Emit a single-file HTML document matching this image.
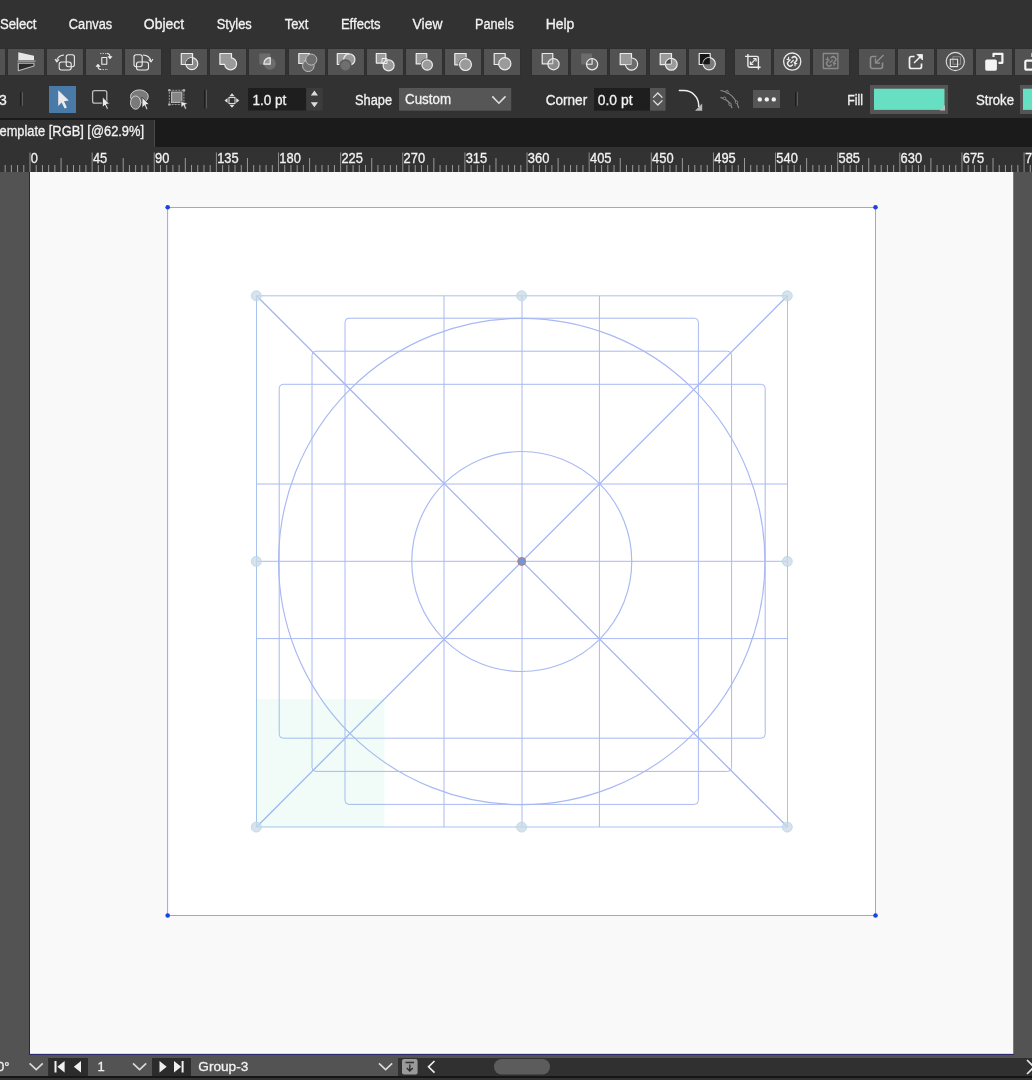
<!DOCTYPE html>
<html><head><meta charset="utf-8"><style>
html,body{margin:0;padding:0;background:#303030;overflow:hidden}
svg{display:block;will-change:transform}
text{font-family:"Liberation Sans", sans-serif}
</style></head><body>
<svg width="1032" height="1080" viewBox="0 0 1032 1080"><rect x="0" y="0" width="1032" height="118" fill="#323232" /><rect x="0" y="118" width="1032" height="29" fill="#1b1b1b" /><rect x="0" y="120" width="155" height="27" fill="#323232" /><rect x="154" y="120" width="1" height="27" fill="#4a4a4a" /><rect x="0" y="147" width="1032" height="25" fill="#323232" /><rect x="0" y="172" width="1032" height="886" fill="#535353" /><rect x="30" y="172" width="984" height="882" fill="#f9f9f9" /><rect x="29" y="172" width="1" height="883" fill="#1f1f8a" /><rect x="29" y="1054" width="985" height="1" fill="#2a2a6a" /><rect x="1013" y="172" width="1" height="882" fill="#6b6bf0" /><rect x="30" y="1053" width="983" height="1" fill="#d8d8fb" /><rect x="0" y="1058" width="1032" height="18" fill="#303030" /><rect x="0" y="1076" width="1032" height="2" fill="#161616" /><rect x="0" y="1078" width="1032" height="2" fill="#323232" /><text x="-0.09999999999999998" y="29" font-size="14" fill="#f2f2f2" textLength="36.5" lengthAdjust="spacingAndGlyphs" stroke-width="0.3" stroke="#f2f2f2">Select</text><text x="68.80000000000001" y="29" font-size="14" fill="#f2f2f2" textLength="43.4" lengthAdjust="spacingAndGlyphs" stroke-width="0.3" stroke="#f2f2f2">Canvas</text><text x="143.8" y="29" font-size="14" fill="#f2f2f2" textLength="40.3" lengthAdjust="spacingAndGlyphs" stroke-width="0.3" stroke="#f2f2f2">Object</text><text x="216.8" y="29" font-size="14" fill="#f2f2f2" textLength="35.0" lengthAdjust="spacingAndGlyphs" stroke-width="0.3" stroke="#f2f2f2">Styles</text><text x="284.7" y="29" font-size="14" fill="#f2f2f2" textLength="23.7" lengthAdjust="spacingAndGlyphs" stroke-width="0.3" stroke="#f2f2f2">Text</text><text x="340.9" y="29" font-size="14" fill="#f2f2f2" textLength="39.7" lengthAdjust="spacingAndGlyphs" stroke-width="0.3" stroke="#f2f2f2">Effects</text><text x="412.59999999999997" y="29" font-size="14" fill="#f2f2f2" textLength="29.8" lengthAdjust="spacingAndGlyphs" stroke-width="0.3" stroke="#f2f2f2">View</text><text x="475.0" y="29" font-size="14" fill="#f2f2f2" textLength="38.8" lengthAdjust="spacingAndGlyphs" stroke-width="0.3" stroke="#f2f2f2">Panels</text><text x="545.6999999999999" y="29" font-size="14" fill="#f2f2f2" textLength="28.7" lengthAdjust="spacingAndGlyphs" stroke-width="0.3" stroke="#f2f2f2">Help</text><rect x="-32" y="48" width="38" height="28" fill="#2f2f2f" /><rect x="-31" y="49" width="36" height="26" fill="#525252" /><rect x="7" y="48" width="38" height="28" fill="#2f2f2f" /><rect x="8" y="49" width="36" height="26" fill="#525252" /><rect x="46" y="48" width="38" height="28" fill="#2f2f2f" /><rect x="47" y="49" width="36" height="26" fill="#525252" /><rect x="85" y="48" width="38" height="28" fill="#2f2f2f" /><rect x="86" y="49" width="36" height="26" fill="#525252" /><rect x="124" y="48" width="38" height="28" fill="#2f2f2f" /><rect x="125" y="49" width="36" height="26" fill="#525252" /><rect x="170" y="48" width="38" height="28" fill="#2f2f2f" /><rect x="171" y="49" width="36" height="26" fill="#525252" /><rect x="209" y="48" width="38" height="28" fill="#2f2f2f" /><rect x="210" y="49" width="36" height="26" fill="#525252" /><rect x="248" y="48" width="38" height="28" fill="#2f2f2f" /><rect x="249" y="49" width="36" height="26" fill="#525252" /><rect x="288" y="48" width="38" height="28" fill="#2f2f2f" /><rect x="289" y="49" width="36" height="26" fill="#525252" /><rect x="327" y="48" width="38" height="28" fill="#2f2f2f" /><rect x="328" y="49" width="36" height="26" fill="#525252" /><rect x="366" y="48" width="38" height="28" fill="#2f2f2f" /><rect x="367" y="49" width="36" height="26" fill="#525252" /><rect x="405" y="48" width="38" height="28" fill="#2f2f2f" /><rect x="406" y="49" width="36" height="26" fill="#525252" /><rect x="444" y="48" width="38" height="28" fill="#2f2f2f" /><rect x="445" y="49" width="36" height="26" fill="#525252" /><rect x="483" y="48" width="38" height="28" fill="#2f2f2f" /><rect x="484" y="49" width="36" height="26" fill="#525252" /><rect x="531" y="48" width="38" height="28" fill="#2f2f2f" /><rect x="532" y="49" width="36" height="26" fill="#525252" /><rect x="570" y="48" width="38" height="28" fill="#2f2f2f" /><rect x="571" y="49" width="36" height="26" fill="#525252" /><rect x="609" y="48" width="38" height="28" fill="#2f2f2f" /><rect x="610" y="49" width="36" height="26" fill="#525252" /><rect x="649" y="48" width="38" height="28" fill="#2f2f2f" /><rect x="650" y="49" width="36" height="26" fill="#525252" /><rect x="688" y="48" width="38" height="28" fill="#2f2f2f" /><rect x="689" y="49" width="36" height="26" fill="#525252" /><rect x="734" y="48" width="38" height="28" fill="#2f2f2f" /><rect x="735" y="49" width="36" height="26" fill="#525252" /><rect x="773" y="48" width="38" height="28" fill="#2f2f2f" /><rect x="774" y="49" width="36" height="26" fill="#525252" /><rect x="812" y="48" width="38" height="28" fill="#2f2f2f" /><rect x="813" y="49" width="36" height="26" fill="#525252" /><rect x="858" y="48" width="38" height="28" fill="#2f2f2f" /><rect x="859" y="49" width="36" height="26" fill="#525252" /><rect x="897" y="48" width="38" height="28" fill="#2f2f2f" /><rect x="898" y="49" width="36" height="26" fill="#525252" /><rect x="936" y="48" width="38" height="28" fill="#2f2f2f" /><rect x="937" y="49" width="36" height="26" fill="#525252" /><rect x="975" y="48" width="38" height="28" fill="#2f2f2f" /><rect x="976" y="49" width="36" height="26" fill="#525252" /><rect x="1014" y="48" width="38" height="28" fill="#2f2f2f" /><rect x="1015" y="49" width="36" height="26" fill="#525252" /><g transform="translate(8,49)" stroke-linejoin="round"><path d="M10.3 3.2 L26 6.8 L26 11.2 L10.3 11.2 Z" fill="#e6e6e6" stroke="none" stroke-width="1.2" /><rect x="9.5" y="11.5" width="18" height="1.4" fill="#9a9a9a"/><path d="M10.3 14.3 L26 14.3 L26 17 L10.3 21.7 Z" fill="#2a2a2a" stroke="#bdbdbd" stroke-width="1.1" /></g><g transform="translate(47,49)" stroke-linejoin="round"><rect x="19.2" y="5.8" width="8.2" height="12" rx="2.2" fill="none" stroke="#ececec" stroke-width="1.1"/><rect x="12.2" y="13" width="12" height="8" rx="2.2" fill="none" stroke="#ececec" stroke-width="1.1"/><path d="M9.5 12 Q11 6.5 17 6" fill="none" stroke="#ececec" stroke-width="1.1" /><path d="M8 10 L9.8 13 L12 10.4" fill="none" stroke="#ececec" stroke-width="1.1" /></g><g transform="translate(86,49)" stroke-linejoin="round"><rect x="15.8" y="8.5" width="5" height="6.8" rx="0" fill="none" stroke="#ececec" stroke-width="1.1"/><path d="M14 4.5 L22 4.5" fill="none" stroke="#bbbbbb" stroke-width="1" stroke-dasharray="1.5 1"/><path d="M14 20.5 L22 20.5" fill="none" stroke="#bbbbbb" stroke-width="1" stroke-dasharray="1.5 1"/><path d="M21 4.5 Q24 4.5 24 8" fill="none" stroke="#ececec" stroke-width="1.1" /><path d="M22 7.5 L24 10 L26 7.5 Z" fill="#ececec" stroke="#ececec" stroke-width="0.6" /><path d="M15 20.5 Q12 20.5 12 17" fill="none" stroke="#ececec" stroke-width="1.1" /><path d="M10 17.5 L12 15 L14 17.5 Z" fill="#ececec" stroke="#ececec" stroke-width="0.6" /></g><g transform="translate(125,49)" stroke-linejoin="round"><rect x="9" y="5.8" width="8.2" height="12" rx="2.2" fill="none" stroke="#ececec" stroke-width="1.1"/><rect x="11.5" y="13" width="12" height="8" rx="2.2" fill="none" stroke="#ececec" stroke-width="1.1"/><path d="M18 6 Q24.5 6.5 26 12" fill="none" stroke="#ececec" stroke-width="1.1" /><path d="M23.8 10.4 L26 13 L28 10" fill="none" stroke="#ececec" stroke-width="1.1" /></g><g transform="translate(171,49)" stroke-linejoin="round"><rect x="10.3" y="4.5" width="11.2" height="11" rx="0" fill="#8a8a8a" stroke="#ececec" stroke-width="1.2"/><circle cx="20.8" cy="14.7" r="6" fill="#8a8a8a" stroke="#ececec" stroke-width="1.2"/><path d="M14.8 15.1 A6 6 0 0 1 21.1 8.7 L21.1 15.1 Z" fill="#555555" stroke="none" stroke-width="1.2" /><path d="M10.3 15.5 L21.5 15.5 L21.5 4.5" fill="none" stroke="#ececec" stroke-width="1.2" /></g><g transform="translate(210,49)" stroke-linejoin="round"><path d="M9.9 4.5 L21.5 4.5 L21.5 8.9 A6 6 0 1 1 14.6 15.3 L9.9 15.3 Z" fill="#9a9a9a" stroke="#ececec" stroke-width="1.2" /></g><g transform="translate(249,49)" stroke-linejoin="round"><rect x="10.3" y="4.5" width="11" height="11" rx="0" fill="#6c6c6c" stroke="none" stroke-width="1.2"/><circle cx="20.8" cy="14.7" r="6" fill="#6c6c6c" stroke="none" stroke-width="1.2"/><path d="M14.8 15.2 A6.2 6.2 0 0 1 21.2 8.6 L21.2 15.2 Z" fill="#9a9a9a" stroke="#ececec" stroke-width="1.2" /></g><g transform="translate(289,49)" stroke-linejoin="round"><path d="M9.8 4.5 L20.5 4.5 L14.8 14.5 L9.8 14.5 Z" fill="#9a9a9a" stroke="#ececec" stroke-width="1.2" /><circle cx="19.3" cy="16.8" r="5.8" fill="#707070" stroke="#bdbdbd" stroke-width="1"/><circle cx="22.3" cy="10.6" r="5.5" fill="#6e6e6e" stroke="#bdbdbd" stroke-width="1"/></g><g transform="translate(328,49)" stroke-linejoin="round"><path d="M9.3 4.5 L20.5 4.5 L20.5 15.5 L9.3 15.5 Z" fill="#9a9a9a" stroke="#ececec" stroke-width="1.2" /><circle cx="21.3" cy="10.5" r="5.6" fill="#9a9a9a" stroke="#ececec" stroke-width="1.2"/><circle cx="17.4" cy="16.6" r="5.6" fill="#6f6f6f" stroke="#555555" stroke-width="1.4"/></g><g transform="translate(367,49)" stroke-linejoin="round"><rect x="9.3" y="4.5" width="9.6" height="9.6" rx="0" fill="#9a9a9a" stroke="#ececec" stroke-width="1.2"/><circle cx="21.6" cy="16.4" r="5.5" fill="#9a9a9a" stroke="#ececec" stroke-width="1.2"/><rect x="15" y="9.5" width="5" height="5" rx="0" fill="none" stroke="#ececec" stroke-width="1"/></g><g transform="translate(406,49)" stroke-linejoin="round"><rect x="10.2" y="4.5" width="10.6" height="10.4" rx="0" fill="#9a9a9a" stroke="#ececec" stroke-width="1.2"/><circle cx="21.2" cy="16" r="5.5" fill="#555555" stroke="#555555" stroke-width="2.2"/><circle cx="21.2" cy="16" r="5.2" fill="#9a9a9a" stroke="#ececec" stroke-width="1.2"/></g><g transform="translate(445,49)" stroke-linejoin="round"><rect x="9.8" y="4.5" width="11.3" height="11.3" rx="0" fill="#9a9a9a" stroke="#ececec" stroke-width="1.2"/><circle cx="20.5" cy="15.6" r="6.1" fill="#555555" stroke="#555555" stroke-width="2.2"/><circle cx="20.5" cy="15.6" r="5.9" fill="#9a9a9a" stroke="#ececec" stroke-width="1.2"/></g><g transform="translate(484,49)" stroke-linejoin="round"><rect x="10.2" y="4.5" width="11" height="11" rx="0" fill="#7a7a7a" stroke="#ececec" stroke-width="1.2"/><circle cx="20.8" cy="14.7" r="6.1" fill="#9a9a9a" stroke="#ececec" stroke-width="1.2"/></g><g transform="translate(532,49)" stroke-linejoin="round"><rect x="10.2" y="4.5" width="10.6" height="10.4" rx="0" fill="#7a7a7a" stroke="#ececec" stroke-width="1.2"/><circle cx="21.5" cy="15.2" r="5.6" fill="#8a8a8a" stroke="#ececec" stroke-width="1.2"/><path d="M16 14.8 L20.8 14.8 L20.8 9.5" fill="none" stroke="#ececec" stroke-width="1" /></g><g transform="translate(571,49)" stroke-linejoin="round"><rect x="10.2" y="4.5" width="11" height="11" rx="0" fill="#6c6c6c" stroke="none" stroke-width="1.2"/><circle cx="21.1" cy="15.3" r="5.6" fill="#6a6a6a" stroke="#ececec" stroke-width="1.2"/><path d="M15.5 15.2 L21.1 15.2 L21.1 9.7" fill="none" stroke="#ececec" stroke-width="1.1" /></g><g transform="translate(610,49)" stroke-linejoin="round"><rect x="10.2" y="4.5" width="11.3" height="11.2" rx="0" fill="#9a9a9a" stroke="#ececec" stroke-width="1.2"/><path d="M21.5 9 A6.1 6.1 0 1 1 15.5 15.7 L21.5 15.7 Z" fill="#6c6c6c" stroke="none" stroke-width="1.2" /><path d="M21.5 9 A6.1 6.1 0 1 1 15.5 15.7" fill="none" stroke="#ececec" stroke-width="1.2" /></g><g transform="translate(650,49)" stroke-linejoin="round"><rect x="10.2" y="4.5" width="11.3" height="11.2" rx="0" fill="#9a9a9a" stroke="#ececec" stroke-width="1.2"/><circle cx="21.3" cy="15.3" r="5.9" fill="#9a9a9a" stroke="#ececec" stroke-width="1.2"/><path d="M15.4 15.2 A5.9 5.9 0 0 1 21.3 9.4 L21.3 15.2 Z" fill="#4a4a4a" stroke="#ececec" stroke-width="1" /></g><g transform="translate(689,49)" stroke-linejoin="round"><rect x="10.2" y="4.5" width="11" height="11" rx="0" fill="#151515" stroke="#ececec" stroke-width="1.2"/><circle cx="20.2" cy="14.8" r="6.1" fill="#7a7a7a" stroke="#ececec" stroke-width="1.2"/><path d="M14.1 15.2 A6.1 6.1 0 0 1 20.8 8.7 L20.8 15.2 Z" fill="#151515" stroke="none" stroke-width="1.2" /></g><g transform="translate(735,49)" stroke-linejoin="round"><path d="M12.9 5 L12.9 16.6 Q12.9 18.2 14.5 18.2 L25.6 18.2" fill="none" stroke="#ececec" stroke-width="1.4" /><path d="M10 7.4 L21.8 7.4 Q23.4 7.4 23.4 9 L23.4 20.6" fill="none" stroke="#ececec" stroke-width="1.4" /><path d="M15.6 15.2 L20.9 9.9" fill="none" stroke="#ececec" stroke-width="1.2" /><path d="M18.2 9.7 L21.1 9.7 L21.1 12.6" fill="none" stroke="#ececec" stroke-width="1.2" /><path d="M15.4 12.5 L15.4 15.4 L18.3 15.4" fill="none" stroke="#ececec" stroke-width="1.2" /></g><g transform="translate(774,49)" stroke-linejoin="round"><circle cx="18.2" cy="12.6" r="8.6" fill="none" stroke="#ececec" stroke-width="1.3"/><g transform="rotate(45 18.2 12.4)"><path d="M15.6 10.6 L15.6 9.6 A2.6 2.6 0 0 1 20.8 9.6 L20.8 12.6" fill="none" stroke="#ececec" stroke-width="1.5"/><path d="M20.8 14.2 L20.8 15.2 A2.6 2.6 0 0 1 15.6 15.2 L15.6 12.2" fill="none" stroke="#ececec" stroke-width="1.5"/><path d="M18.2 10.2 L18.2 14.6" fill="none" stroke="#ececec" stroke-width="1.3"/></g><path d="M14.6 7.8 L14.6 10.4 L12.6 10.4" fill="none" stroke="#ececec" stroke-width="1.1" /><path d="M21 17.2 L21 14.6 L23.2 14.6" fill="none" stroke="#ececec" stroke-width="1.1" /></g><g transform="translate(813,49)" stroke-linejoin="round"><rect x="10.3" y="4.5" width="14.6" height="15" rx="0" fill="none" stroke="#8a8a8a" stroke-width="1.3"/><g transform="rotate(45 18.2 12.4)"><path d="M15.6 10.6 L15.6 9.6 A2.6 2.6 0 0 1 20.8 9.6 L20.8 12.6" fill="none" stroke="#8a8a8a" stroke-width="1.5"/><path d="M20.8 14.2 L20.8 15.2 A2.6 2.6 0 0 1 15.6 15.2 L15.6 12.2" fill="none" stroke="#8a8a8a" stroke-width="1.5"/><path d="M18.2 10.2 L18.2 14.6" fill="none" stroke="#8a8a8a" stroke-width="1.3"/></g><path d="M14.6 7.8 L14.6 10.4 L12.6 10.4" fill="none" stroke="#8a8a8a" stroke-width="1.1" /><path d="M21 17.2 L21 14.6 L23.2 14.6" fill="none" stroke="#8a8a8a" stroke-width="1.1" /></g><g transform="translate(859,49)" stroke-linejoin="round"><path d="M17.5 7.5 L13.5 7.5 Q11.5 7.5 11.5 9.5 L11.5 17.5 Q11.5 19.5 13.5 19.5 L21.5 19.5 Q23.5 19.5 23.5 17.5 L23.5 13.5" fill="none" stroke="#8e8e8e" stroke-width="1.6" /><path d="M24.5 6 L17 13.5" fill="none" stroke="#8e8e8e" stroke-width="1.4" /><path d="M16.5 9.5 L16.5 14 L21 14" fill="none" stroke="#8e8e8e" stroke-width="1.4" /></g><g transform="translate(898,49)" stroke-linejoin="round"><path d="M16.5 7.5 L13.5 7.5 Q11.5 7.5 11.5 9.5 L11.5 17.5 Q11.5 19.5 13.5 19.5 L21.5 19.5 Q23.5 19.5 23.5 17.5 L23.5 14.5" fill="none" stroke="#f2f2f2" stroke-width="1.7" /><path d="M16 14 L23.8 6.3" fill="none" stroke="#f2f2f2" stroke-width="1.5" /><path d="M19 5.5 L24.5 5.5 L24.5 11 Z" fill="#f2f2f2" stroke="#f2f2f2" stroke-width="0.8" /></g><g transform="translate(937,49)" stroke-linejoin="round"><circle cx="18.3" cy="12.5" r="9.1" fill="none" stroke="#dcdcdc" stroke-width="1.1"/><rect x="16" y="7.8" width="7.5" height="7.5" rx="0" fill="none" stroke="#8a8a8a" stroke-width="1.1"/><rect x="13.3" y="10.3" width="7.3" height="7.3" rx="0" fill="none" stroke="#e6e6e6" stroke-width="1.1"/></g><g transform="translate(976,49)" stroke-linejoin="round"><path d="M17.5 8 L17.5 4.8 L26.4 4.8 L26.4 13.8 L22.5 13.8" fill="none" stroke="#f4f4f4" stroke-width="2.2" /><rect x="9.2" y="10.6" width="11.7" height="11.1" rx="1.6" fill="#f4f4f4"/></g><g transform="translate(1015,49)" stroke-linejoin="round"><path d="M17.5 8 L17.5 4.8 L26.4 4.8" fill="none" stroke="#f4f4f4" stroke-width="2.2" /><rect x="10.3" y="11.7" width="9.5" height="9" rx="1.5" fill="none" stroke="#f4f4f4" stroke-width="2.2"/></g><text x="-1" y="105" font-size="14" fill="#f2f2f2" stroke-width="0.3" stroke="#f2f2f2">3</text><rect x="20" y="92.3" width="1" height="13.4" fill="#1c1c1c" /><rect x="22" y="92.3" width="1" height="13.4" fill="#5a5a5a" /><rect x="49" y="86" width="27" height="27" fill="#4a7aa8" /><rect x="204" y="90" width="1" height="18.4" fill="#1c1c1c" /><rect x="206" y="90" width="1" height="18.4" fill="#5a5a5a" /><rect x="248" y="88" width="58" height="22.5" fill="#1e1e1e" /><rect x="306.5" y="88" width="16" height="22.5" fill="#3c3c3c" /><text x="252.4" y="105.4" font-size="14" fill="#f2f2f2" textLength="34" lengthAdjust="spacingAndGlyphs" stroke-width="0.3" stroke="#f2f2f2">1.0 pt</text><text x="355" y="105.4" font-size="14" fill="#f2f2f2" textLength="37" lengthAdjust="spacingAndGlyphs" stroke-width="0.3" stroke="#f2f2f2">Shape</text><rect x="399" y="88" width="112.2" height="22.7" fill="#565656" /><text x="405" y="104.3" font-size="14" fill="#f2f2f2" textLength="46" lengthAdjust="spacingAndGlyphs" stroke-width="0.3" stroke="#f2f2f2">Custom</text><text x="545.7" y="105.4" font-size="14" fill="#f2f2f2" textLength="41.5" lengthAdjust="spacingAndGlyphs" stroke-width="0.3" stroke="#f2f2f2">Corner</text><rect x="594" y="88" width="56" height="22.7" fill="#1e1e1e" /><rect x="650" y="88" width="15.6" height="22.7" fill="#555555" /><text x="597.8" y="105.4" font-size="14" fill="#f2f2f2" textLength="34.7" lengthAdjust="spacingAndGlyphs" stroke-width="0.3" stroke="#f2f2f2">0.0 pt</text><rect x="753" y="90" width="27" height="18" fill="#555555" /><rect x="795" y="92.2" width="1" height="13.6" fill="#1c1c1c" /><rect x="797" y="92.2" width="1" height="13.6" fill="#5a5a5a" /><text x="847.3" y="105.4" font-size="14" fill="#f2f2f2" textLength="15.7" lengthAdjust="spacingAndGlyphs" stroke-width="0.3" stroke="#f2f2f2">Fill</text><rect x="870" y="85" width="78" height="29" fill="#555555" /><rect x="874" y="88.7" width="70.5" height="21.2" fill="#66dfc3" /><text x="976" y="105.4" font-size="14" fill="#f2f2f2" textLength="38" lengthAdjust="spacingAndGlyphs" stroke-width="0.3" stroke="#f2f2f2">Stroke</text><rect x="1020" y="85" width="20" height="29" fill="#555555" /><rect x="1023" y="88.7" width="20" height="21.2" fill="#66dfc3" /><path d="M58.2 90.2 L68.8 100.6 L64 101.2 L66.9 107.4 L64.6 108.6 L61.6 102.4 L58.2 105.9 Z" fill="#ebebeb"/><rect x="92.6" y="90.6" width="14.2" height="12.6" rx="2" fill="none" stroke="#bdbdbd" stroke-width="1.3"/><path d="M102.4 96.8 L109.6 104 L106.4 104.3 L108.4 108.6 L106.8 109.4 L104.8 105.1 L102.4 107.5 Z" fill="#ebebeb" stroke="#303030" stroke-width="0.8"/><ellipse cx="139.4" cy="96.5" rx="8.9" ry="6.6" fill="#7a7a7a" stroke="#cfcfcf" stroke-width="1"/><ellipse cx="135.6" cy="102.6" rx="5.1" ry="6.6" fill="#7a7a7a" stroke="#cfcfcf" stroke-width="1"/><path d="M142 97.2 L149.2 104.4 L146 104.7 L148 109 L146.4 109.8 L144.4 105.5 L142 107.9 Z" fill="#ebebeb" stroke="#303030" stroke-width="0.8"/><rect x="169.3" y="90.3" width="14.6" height="14.2" fill="none" stroke="#9a9a9a" stroke-width="1" stroke-dasharray="2 1"/><rect x="171.6" y="92.2" width="10.2" height="10.2" fill="#858585" stroke="#b5b5b5" stroke-width="1.2"/><circle cx="169.3" cy="90.3" r="1.3" fill="#b0b0b0"/><circle cx="183.9" cy="90.3" r="1.3" fill="#b0b0b0"/><circle cx="169.3" cy="104.5" r="1.3" fill="#b0b0b0"/><path d="M180.9 101.4 L188 103.6 L185 104.8 L186.6 108.6 L185 109.2 L183.4 105.4 L181.2 107.4 Z" fill="#ebebeb" stroke="#303030" stroke-width="0.6"/><rect x="229" y="97.5" width="6" height="6" fill="none" stroke="#d8d8d8" stroke-width="1.1"/><path d="M232 93.3 L234.6 96.3 L229.4 96.3 Z M232 107.8 L234.6 104.8 L229.4 104.8 Z M224.5 100.5 L227.6 97.9 L227.6 103.1 Z M239.3 100.5 L236.2 97.9 L236.2 103.1 Z" fill="#e0e0e0"/><path d="M314.4 90.6 L318 95.5 L310.8 95.5 Z M314.4 107.2 L318 102.3 L310.8 102.3 Z" fill="#dcdcdc"/><path d="M492.3 96.4 L498.9 103.2 L505.5 96.4" fill="none" stroke="#dedede" stroke-width="1.6"/><path d="M653.2 97.6 L657.8 93 L662.4 97.6 M653.2 100.4 L657.8 105 L662.4 100.4" fill="none" stroke="#e0e0e0" stroke-width="1.3"/><path d="M678.8 90.6 L684 90.6 A14.7 14.7 0 0 1 698.7 105.3 L698.7 107" fill="none" stroke="#f0f0f0" stroke-width="1.5"/><path d="M695 110.8 L702.2 110.8 L702.2 103.5 Z" fill="#b8b8b8"/><path d="M720.5 90.5 Q734.5 93 738.8 108.2 M720.6 97.4 Q729.8 100 732 108.2" fill="none" stroke="#8c8c8c" stroke-width="1.2"/><circle cx="727" cy="91.8" r="1.3" fill="#303030" stroke="#8c8c8c" stroke-width="0.9"/><circle cx="736.5" cy="102.2" r="1.3" fill="#303030" stroke="#8c8c8c" stroke-width="0.9"/><circle cx="724.5" cy="98.3" r="1.3" fill="#303030" stroke="#8c8c8c" stroke-width="0.9"/><circle cx="730" cy="104.2" r="1.3" fill="#303030" stroke="#8c8c8c" stroke-width="0.9"/><circle cx="759.8" cy="99.4" r="2.2" fill="#f2f2f2"/><circle cx="766.8" cy="99.4" r="2.2" fill="#f2f2f2"/><circle cx="773.8" cy="99.4" r="2.2" fill="#f2f2f2"/><path d="M939.5 110.5 L945 110.5 L945 105 Z" fill="#bdbdbd"/><text x="-0.5" y="135.9" font-size="14" fill="#f2f2f2" textLength="144.5" lengthAdjust="spacingAndGlyphs" stroke-width="0.3" stroke="#f2f2f2">emplate [RGB] [@62.9%]</text><rect x="4.65" y="165" width="1" height="7" fill="#9a9a9a"/><rect x="10.86" y="165" width="1" height="7" fill="#9a9a9a"/><rect x="17.07" y="165" width="1" height="7" fill="#9a9a9a"/><rect x="23.29" y="165" width="1" height="7" fill="#9a9a9a"/><rect x="29.50" y="152.5" width="1" height="19.5" fill="#8f8f8f"/><rect x="35.71" y="165" width="1" height="7" fill="#9a9a9a"/><rect x="41.93" y="165" width="1" height="7" fill="#9a9a9a"/><rect x="48.14" y="165" width="1" height="7" fill="#9a9a9a"/><rect x="54.35" y="165" width="1" height="7" fill="#9a9a9a"/><rect x="60.57" y="158" width="1" height="14" fill="#9a9a9a"/><rect x="66.78" y="165" width="1" height="7" fill="#9a9a9a"/><rect x="72.99" y="165" width="1" height="7" fill="#9a9a9a"/><rect x="79.20" y="165" width="1" height="7" fill="#9a9a9a"/><rect x="85.42" y="165" width="1" height="7" fill="#9a9a9a"/><rect x="91.63" y="152.5" width="1" height="19.5" fill="#8f8f8f"/><rect x="97.84" y="165" width="1" height="7" fill="#9a9a9a"/><rect x="104.06" y="165" width="1" height="7" fill="#9a9a9a"/><rect x="110.27" y="165" width="1" height="7" fill="#9a9a9a"/><rect x="116.48" y="165" width="1" height="7" fill="#9a9a9a"/><rect x="122.70" y="158" width="1" height="14" fill="#9a9a9a"/><rect x="128.91" y="165" width="1" height="7" fill="#9a9a9a"/><rect x="135.12" y="165" width="1" height="7" fill="#9a9a9a"/><rect x="141.33" y="165" width="1" height="7" fill="#9a9a9a"/><rect x="147.55" y="165" width="1" height="7" fill="#9a9a9a"/><rect x="153.76" y="152.5" width="1" height="19.5" fill="#8f8f8f"/><rect x="159.97" y="165" width="1" height="7" fill="#9a9a9a"/><rect x="166.19" y="165" width="1" height="7" fill="#9a9a9a"/><rect x="172.40" y="165" width="1" height="7" fill="#9a9a9a"/><rect x="178.61" y="165" width="1" height="7" fill="#9a9a9a"/><rect x="184.82" y="158" width="1" height="14" fill="#9a9a9a"/><rect x="191.04" y="165" width="1" height="7" fill="#9a9a9a"/><rect x="197.25" y="165" width="1" height="7" fill="#9a9a9a"/><rect x="203.46" y="165" width="1" height="7" fill="#9a9a9a"/><rect x="209.68" y="165" width="1" height="7" fill="#9a9a9a"/><rect x="215.89" y="152.5" width="1" height="19.5" fill="#8f8f8f"/><rect x="222.10" y="165" width="1" height="7" fill="#9a9a9a"/><rect x="228.32" y="165" width="1" height="7" fill="#9a9a9a"/><rect x="234.53" y="165" width="1" height="7" fill="#9a9a9a"/><rect x="240.74" y="165" width="1" height="7" fill="#9a9a9a"/><rect x="246.96" y="158" width="1" height="14" fill="#9a9a9a"/><rect x="253.17" y="165" width="1" height="7" fill="#9a9a9a"/><rect x="259.38" y="165" width="1" height="7" fill="#9a9a9a"/><rect x="265.59" y="165" width="1" height="7" fill="#9a9a9a"/><rect x="271.81" y="165" width="1" height="7" fill="#9a9a9a"/><rect x="278.02" y="152.5" width="1" height="19.5" fill="#8f8f8f"/><rect x="284.23" y="165" width="1" height="7" fill="#9a9a9a"/><rect x="290.45" y="165" width="1" height="7" fill="#9a9a9a"/><rect x="296.66" y="165" width="1" height="7" fill="#9a9a9a"/><rect x="302.87" y="165" width="1" height="7" fill="#9a9a9a"/><rect x="309.08" y="158" width="1" height="14" fill="#9a9a9a"/><rect x="315.30" y="165" width="1" height="7" fill="#9a9a9a"/><rect x="321.51" y="165" width="1" height="7" fill="#9a9a9a"/><rect x="327.72" y="165" width="1" height="7" fill="#9a9a9a"/><rect x="333.94" y="165" width="1" height="7" fill="#9a9a9a"/><rect x="340.15" y="152.5" width="1" height="19.5" fill="#8f8f8f"/><rect x="346.36" y="165" width="1" height="7" fill="#9a9a9a"/><rect x="352.58" y="165" width="1" height="7" fill="#9a9a9a"/><rect x="358.79" y="165" width="1" height="7" fill="#9a9a9a"/><rect x="365.00" y="165" width="1" height="7" fill="#9a9a9a"/><rect x="371.22" y="158" width="1" height="14" fill="#9a9a9a"/><rect x="377.43" y="165" width="1" height="7" fill="#9a9a9a"/><rect x="383.64" y="165" width="1" height="7" fill="#9a9a9a"/><rect x="389.85" y="165" width="1" height="7" fill="#9a9a9a"/><rect x="396.07" y="165" width="1" height="7" fill="#9a9a9a"/><rect x="402.28" y="152.5" width="1" height="19.5" fill="#8f8f8f"/><rect x="408.49" y="165" width="1" height="7" fill="#9a9a9a"/><rect x="414.71" y="165" width="1" height="7" fill="#9a9a9a"/><rect x="420.92" y="165" width="1" height="7" fill="#9a9a9a"/><rect x="427.13" y="165" width="1" height="7" fill="#9a9a9a"/><rect x="433.35" y="158" width="1" height="14" fill="#9a9a9a"/><rect x="439.56" y="165" width="1" height="7" fill="#9a9a9a"/><rect x="445.77" y="165" width="1" height="7" fill="#9a9a9a"/><rect x="451.98" y="165" width="1" height="7" fill="#9a9a9a"/><rect x="458.20" y="165" width="1" height="7" fill="#9a9a9a"/><rect x="464.41" y="152.5" width="1" height="19.5" fill="#8f8f8f"/><rect x="470.62" y="165" width="1" height="7" fill="#9a9a9a"/><rect x="476.84" y="165" width="1" height="7" fill="#9a9a9a"/><rect x="483.05" y="165" width="1" height="7" fill="#9a9a9a"/><rect x="489.26" y="165" width="1" height="7" fill="#9a9a9a"/><rect x="495.48" y="158" width="1" height="14" fill="#9a9a9a"/><rect x="501.69" y="165" width="1" height="7" fill="#9a9a9a"/><rect x="507.90" y="165" width="1" height="7" fill="#9a9a9a"/><rect x="514.11" y="165" width="1" height="7" fill="#9a9a9a"/><rect x="520.33" y="165" width="1" height="7" fill="#9a9a9a"/><rect x="526.54" y="152.5" width="1" height="19.5" fill="#8f8f8f"/><rect x="532.75" y="165" width="1" height="7" fill="#9a9a9a"/><rect x="538.97" y="165" width="1" height="7" fill="#9a9a9a"/><rect x="545.18" y="165" width="1" height="7" fill="#9a9a9a"/><rect x="551.39" y="165" width="1" height="7" fill="#9a9a9a"/><rect x="557.61" y="158" width="1" height="14" fill="#9a9a9a"/><rect x="563.82" y="165" width="1" height="7" fill="#9a9a9a"/><rect x="570.03" y="165" width="1" height="7" fill="#9a9a9a"/><rect x="576.24" y="165" width="1" height="7" fill="#9a9a9a"/><rect x="582.46" y="165" width="1" height="7" fill="#9a9a9a"/><rect x="588.67" y="152.5" width="1" height="19.5" fill="#8f8f8f"/><rect x="594.88" y="165" width="1" height="7" fill="#9a9a9a"/><rect x="601.10" y="165" width="1" height="7" fill="#9a9a9a"/><rect x="607.31" y="165" width="1" height="7" fill="#9a9a9a"/><rect x="613.52" y="165" width="1" height="7" fill="#9a9a9a"/><rect x="619.74" y="158" width="1" height="14" fill="#9a9a9a"/><rect x="625.95" y="165" width="1" height="7" fill="#9a9a9a"/><rect x="632.16" y="165" width="1" height="7" fill="#9a9a9a"/><rect x="638.37" y="165" width="1" height="7" fill="#9a9a9a"/><rect x="644.59" y="165" width="1" height="7" fill="#9a9a9a"/><rect x="650.80" y="152.5" width="1" height="19.5" fill="#8f8f8f"/><rect x="657.01" y="165" width="1" height="7" fill="#9a9a9a"/><rect x="663.23" y="165" width="1" height="7" fill="#9a9a9a"/><rect x="669.44" y="165" width="1" height="7" fill="#9a9a9a"/><rect x="675.65" y="165" width="1" height="7" fill="#9a9a9a"/><rect x="681.87" y="158" width="1" height="14" fill="#9a9a9a"/><rect x="688.08" y="165" width="1" height="7" fill="#9a9a9a"/><rect x="694.29" y="165" width="1" height="7" fill="#9a9a9a"/><rect x="700.50" y="165" width="1" height="7" fill="#9a9a9a"/><rect x="706.72" y="165" width="1" height="7" fill="#9a9a9a"/><rect x="712.93" y="152.5" width="1" height="19.5" fill="#8f8f8f"/><rect x="719.14" y="165" width="1" height="7" fill="#9a9a9a"/><rect x="725.36" y="165" width="1" height="7" fill="#9a9a9a"/><rect x="731.57" y="165" width="1" height="7" fill="#9a9a9a"/><rect x="737.78" y="165" width="1" height="7" fill="#9a9a9a"/><rect x="744.00" y="158" width="1" height="14" fill="#9a9a9a"/><rect x="750.21" y="165" width="1" height="7" fill="#9a9a9a"/><rect x="756.42" y="165" width="1" height="7" fill="#9a9a9a"/><rect x="762.63" y="165" width="1" height="7" fill="#9a9a9a"/><rect x="768.85" y="165" width="1" height="7" fill="#9a9a9a"/><rect x="775.06" y="152.5" width="1" height="19.5" fill="#8f8f8f"/><rect x="781.27" y="165" width="1" height="7" fill="#9a9a9a"/><rect x="787.49" y="165" width="1" height="7" fill="#9a9a9a"/><rect x="793.70" y="165" width="1" height="7" fill="#9a9a9a"/><rect x="799.91" y="165" width="1" height="7" fill="#9a9a9a"/><rect x="806.12" y="158" width="1" height="14" fill="#9a9a9a"/><rect x="812.34" y="165" width="1" height="7" fill="#9a9a9a"/><rect x="818.55" y="165" width="1" height="7" fill="#9a9a9a"/><rect x="824.76" y="165" width="1" height="7" fill="#9a9a9a"/><rect x="830.98" y="165" width="1" height="7" fill="#9a9a9a"/><rect x="837.19" y="152.5" width="1" height="19.5" fill="#8f8f8f"/><rect x="843.40" y="165" width="1" height="7" fill="#9a9a9a"/><rect x="849.62" y="165" width="1" height="7" fill="#9a9a9a"/><rect x="855.83" y="165" width="1" height="7" fill="#9a9a9a"/><rect x="862.04" y="165" width="1" height="7" fill="#9a9a9a"/><rect x="868.26" y="158" width="1" height="14" fill="#9a9a9a"/><rect x="874.47" y="165" width="1" height="7" fill="#9a9a9a"/><rect x="880.68" y="165" width="1" height="7" fill="#9a9a9a"/><rect x="886.89" y="165" width="1" height="7" fill="#9a9a9a"/><rect x="893.11" y="165" width="1" height="7" fill="#9a9a9a"/><rect x="899.32" y="152.5" width="1" height="19.5" fill="#8f8f8f"/><rect x="905.53" y="165" width="1" height="7" fill="#9a9a9a"/><rect x="911.75" y="165" width="1" height="7" fill="#9a9a9a"/><rect x="917.96" y="165" width="1" height="7" fill="#9a9a9a"/><rect x="924.17" y="165" width="1" height="7" fill="#9a9a9a"/><rect x="930.38" y="158" width="1" height="14" fill="#9a9a9a"/><rect x="936.60" y="165" width="1" height="7" fill="#9a9a9a"/><rect x="942.81" y="165" width="1" height="7" fill="#9a9a9a"/><rect x="949.02" y="165" width="1" height="7" fill="#9a9a9a"/><rect x="955.24" y="165" width="1" height="7" fill="#9a9a9a"/><rect x="961.45" y="152.5" width="1" height="19.5" fill="#8f8f8f"/><rect x="967.66" y="165" width="1" height="7" fill="#9a9a9a"/><rect x="973.88" y="165" width="1" height="7" fill="#9a9a9a"/><rect x="980.09" y="165" width="1" height="7" fill="#9a9a9a"/><rect x="986.30" y="165" width="1" height="7" fill="#9a9a9a"/><rect x="992.51" y="158" width="1" height="14" fill="#9a9a9a"/><rect x="998.73" y="165" width="1" height="7" fill="#9a9a9a"/><rect x="1004.94" y="165" width="1" height="7" fill="#9a9a9a"/><rect x="1011.15" y="165" width="1" height="7" fill="#9a9a9a"/><rect x="1017.37" y="165" width="1" height="7" fill="#9a9a9a"/><rect x="1023.58" y="152.5" width="1" height="19.5" fill="#8f8f8f"/><rect x="1029.79" y="165" width="1" height="7" fill="#9a9a9a"/><text x="30.8" y="163" font-size="14" fill="#f2f2f2" textLength="7.16" lengthAdjust="spacingAndGlyphs" stroke-width="0.3" stroke="#f2f2f2">0</text><text x="92.93" y="163" font-size="14" fill="#f2f2f2" textLength="14.32" lengthAdjust="spacingAndGlyphs" stroke-width="0.3" stroke="#f2f2f2">45</text><text x="155.06" y="163" font-size="14" fill="#f2f2f2" textLength="14.32" lengthAdjust="spacingAndGlyphs" stroke-width="0.3" stroke="#f2f2f2">90</text><text x="217.19" y="163" font-size="14" fill="#f2f2f2" textLength="21.49" lengthAdjust="spacingAndGlyphs" stroke-width="0.3" stroke="#f2f2f2">135</text><text x="279.32" y="163" font-size="14" fill="#f2f2f2" textLength="21.49" lengthAdjust="spacingAndGlyphs" stroke-width="0.3" stroke="#f2f2f2">180</text><text x="341.45" y="163" font-size="14" fill="#f2f2f2" textLength="21.49" lengthAdjust="spacingAndGlyphs" stroke-width="0.3" stroke="#f2f2f2">225</text><text x="403.58" y="163" font-size="14" fill="#f2f2f2" textLength="21.49" lengthAdjust="spacingAndGlyphs" stroke-width="0.3" stroke="#f2f2f2">270</text><text x="465.71" y="163" font-size="14" fill="#f2f2f2" textLength="21.49" lengthAdjust="spacingAndGlyphs" stroke-width="0.3" stroke="#f2f2f2">315</text><text x="527.84" y="163" font-size="14" fill="#f2f2f2" textLength="21.49" lengthAdjust="spacingAndGlyphs" stroke-width="0.3" stroke="#f2f2f2">360</text><text x="589.97" y="163" font-size="14" fill="#f2f2f2" textLength="21.49" lengthAdjust="spacingAndGlyphs" stroke-width="0.3" stroke="#f2f2f2">405</text><text x="652.1" y="163" font-size="14" fill="#f2f2f2" textLength="21.49" lengthAdjust="spacingAndGlyphs" stroke-width="0.3" stroke="#f2f2f2">450</text><text x="714.23" y="163" font-size="14" fill="#f2f2f2" textLength="21.49" lengthAdjust="spacingAndGlyphs" stroke-width="0.3" stroke="#f2f2f2">495</text><text x="776.36" y="163" font-size="14" fill="#f2f2f2" textLength="21.49" lengthAdjust="spacingAndGlyphs" stroke-width="0.3" stroke="#f2f2f2">540</text><text x="838.49" y="163" font-size="14" fill="#f2f2f2" textLength="21.49" lengthAdjust="spacingAndGlyphs" stroke-width="0.3" stroke="#f2f2f2">585</text><text x="900.62" y="163" font-size="14" fill="#f2f2f2" textLength="21.49" lengthAdjust="spacingAndGlyphs" stroke-width="0.3" stroke="#f2f2f2">630</text><text x="962.75" y="163" font-size="14" fill="#f2f2f2" textLength="21.49" lengthAdjust="spacingAndGlyphs" stroke-width="0.3" stroke="#f2f2f2">675</text><text x="1024.88" y="163" font-size="14" fill="#f2f2f2" textLength="21.49" lengthAdjust="spacingAndGlyphs" stroke-width="0.3" stroke="#f2f2f2">720</text><rect x="167.5" y="207.5" width="708" height="708" fill="#ffffff"/><line x1="256.5" y1="295.8" x2="256.5" y2="827.0" stroke="#a9c3f0" stroke-width="1"/><line x1="444.0" y1="295.8" x2="444.0" y2="827.0" stroke="#a9b9f3" stroke-width="1"/><line x1="522.0" y1="295.8" x2="522.0" y2="827.0" stroke="#a9b9f3" stroke-width="1"/><line x1="599.4" y1="295.8" x2="599.4" y2="827.0" stroke="#a9b9f3" stroke-width="1"/><line x1="787.5" y1="295.8" x2="787.5" y2="827.0" stroke="#a9c3f0" stroke-width="1"/><line x1="256.5" y1="295.8" x2="787.5" y2="295.8" stroke="#a9c3f0" stroke-width="1"/><line x1="256.5" y1="484.0" x2="787.5" y2="484.0" stroke="#a9b9f3" stroke-width="1"/><line x1="256.5" y1="561.3" x2="787.5" y2="561.3" stroke="#a9b9f3" stroke-width="1"/><line x1="256.5" y1="638.6" x2="787.5" y2="638.6" stroke="#a9b9f3" stroke-width="1"/><line x1="256.5" y1="827.0" x2="787.5" y2="827.0" stroke="#a9c3f0" stroke-width="1"/><line x1="256.5" y1="295.8" x2="787.5" y2="827.0" stroke="#a3b3f1" stroke-width="1.25"/><line x1="787.5" y1="295.8" x2="256.5" y2="827.0" stroke="#a3b3f1" stroke-width="1.25"/><circle cx="521.75" cy="561.5" r="243.2" fill="none" stroke="#a9b9f3" stroke-width="1.15"/><circle cx="521.75" cy="561.5" r="110" fill="none" stroke="#a9b9f3" stroke-width="1.15"/><rect x="279.2" y="384.3" width="486.00000000000006" height="353.90000000000003" rx="4" fill="none" stroke="#a9b9f3" stroke-width="1"/><rect x="312.0" y="351.2" width="419.6" height="420.2" rx="4" fill="none" stroke="#a9b9f3" stroke-width="1"/><rect x="345.0" y="318.2" width="353.4" height="486.2" rx="4" fill="none" stroke="#a9b9f3" stroke-width="1"/><rect x="256" y="699" width="128.5" height="128" fill="#5fdcbf" fill-opacity="0.09"/><rect x="167.6" y="207.5" width="707.9" height="708" fill="none" stroke="#9f9ff5" stroke-width="1"/><circle cx="167.7" cy="207.3" r="2.3" fill="#1b45d8"/><circle cx="875.5" cy="207.3" r="2.3" fill="#1b45d8"/><circle cx="167.7" cy="915.5" r="2.3" fill="#1b45d8"/><circle cx="875.5" cy="915.5" r="2.3" fill="#1b45d8"/><circle cx="256.3" cy="295.8" r="5" fill="#c9d8e6" fill-opacity="0.75" stroke="#b5d9e4" stroke-opacity="0.8" stroke-width="1"/><circle cx="521.6" cy="295.8" r="5" fill="#c9d8e6" fill-opacity="0.75" stroke="#b5d9e4" stroke-opacity="0.8" stroke-width="1"/><circle cx="787.3" cy="295.8" r="5" fill="#c9d8e6" fill-opacity="0.75" stroke="#b5d9e4" stroke-opacity="0.8" stroke-width="1"/><circle cx="256.3" cy="561.4" r="5" fill="#c9d8e6" fill-opacity="0.75" stroke="#b5d9e4" stroke-opacity="0.8" stroke-width="1"/><circle cx="787.3" cy="561.4" r="5" fill="#c9d8e6" fill-opacity="0.75" stroke="#b5d9e4" stroke-opacity="0.8" stroke-width="1"/><circle cx="256.3" cy="827.1" r="5" fill="#c9d8e6" fill-opacity="0.75" stroke="#b5d9e4" stroke-opacity="0.8" stroke-width="1"/><circle cx="521.6" cy="827.1" r="5" fill="#c9d8e6" fill-opacity="0.75" stroke="#b5d9e4" stroke-opacity="0.8" stroke-width="1"/><circle cx="787.3" cy="827.1" r="5" fill="#c9d8e6" fill-opacity="0.75" stroke="#b5d9e4" stroke-opacity="0.8" stroke-width="1"/><circle cx="521.7" cy="561.4" r="4" fill="#6f98d9" stroke="#c87a6e" stroke-width="1"/><rect x="0" y="1057.5" width="48" height="18.5" fill="#535353" /><rect x="49" y="1058" width="39" height="18" fill="#2c2c2c" /><rect x="88" y="1058" width="64" height="18" fill="#535353" /><rect x="152" y="1058" width="39" height="18" fill="#2c2c2c" /><rect x="191" y="1058" width="207" height="18" fill="#535353" /><text x="198.3" y="1070.9" font-size="13" fill="#f2f2f2" textLength="50" lengthAdjust="spacingAndGlyphs" stroke-width="0.3" stroke="#f2f2f2">Group-3</text><text x="97.5" y="1070.9" font-size="13" fill="#f2f2f2" stroke-width="0.3" stroke="#f2f2f2">1</text><text x="-3" y="1070.9" font-size="13" fill="#f2f2f2" stroke-width="0.3" stroke="#f2f2f2">0°</text><rect x="402" y="1059" width="15.6" height="15.5" rx="2" fill="#9a9a9a"/><rect x="494" y="1059" width="56" height="15.5" rx="7.5" fill="#5c5c5c"/><path d="M29.6 1063.4 L36.2 1069.6 L42.8 1063.4" fill="none" stroke="#dcdcdc" stroke-width="1.6"/><rect x="54.5" y="1061" width="2" height="11.5" fill="#f0f0f0"/><path d="M57.4 1066.8 L64.6 1061 L64.6 1072.5 Z" fill="#f0f0f0"/><path d="M73.8 1066.8 L81 1061 L81 1072.5 Z" fill="#f0f0f0"/><path d="M133 1063.4 L139.6 1069.6 L146.2 1063.4" fill="none" stroke="#dcdcdc" stroke-width="1.6"/><path d="M159.5 1061 L166.7 1066.8 L159.5 1072.5 Z" fill="#f0f0f0"/><path d="M174 1061 L181.2 1066.8 L174 1072.5 Z" fill="#f0f0f0"/><rect x="181.6" y="1061" width="2" height="11.5" fill="#f0f0f0"/><path d="M379 1063.4 L385.6 1069.6 L392.2 1063.4" fill="none" stroke="#dcdcdc" stroke-width="1.6"/><path d="M405.5 1062.5 L414 1062.5 M409.8 1064.5 L409.8 1071 M406.8 1068 L409.8 1071 L412.8 1068" fill="none" stroke="#303030" stroke-width="1.4"/><path d="M434.5 1061 L428.5 1066.8 L434.5 1072.6" fill="none" stroke="#f0f0f0" stroke-width="1.6"/><path d="M1027 1060 L1034 1067 M1027 1074 L1034 1067" fill="none" stroke="#e6e6e6" stroke-width="1.6"/></svg>
</body></html>
